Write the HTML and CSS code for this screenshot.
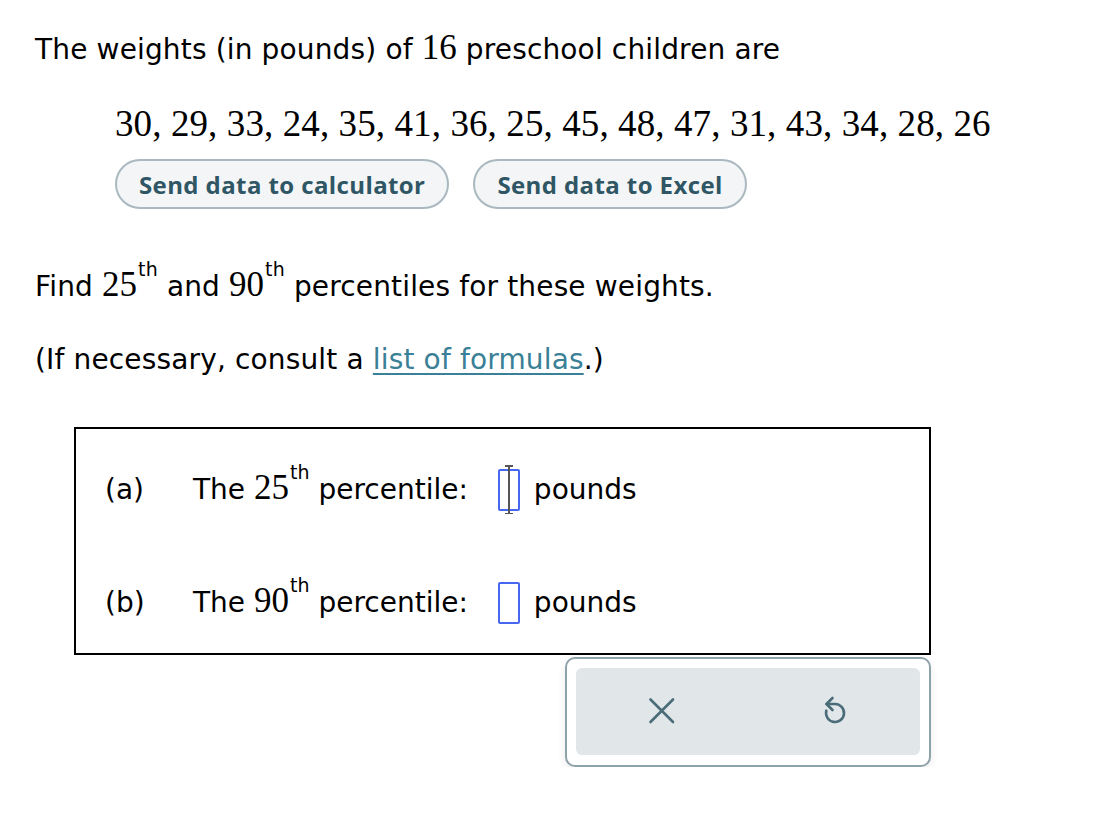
FILE: index.html
```html
<!DOCTYPE html>
<html>
<head>
<meta charset="utf-8">
<link rel="stylesheet" href="styles.css">
</head>
<body>
<div class="page">
  <p class="intro">The weights (in pounds) of <span class="m">16</span> preschool children are</p>
  <div class="data">
    <div class="nums">30, 29, 33, 24, 35, 41, 36, 25, 45, 48, 47, 31, 43, 34, 28, 26</div>
    <div class="btns">
      <button class="pill">Send data to calculator</button>
      <button class="pill">Send data to Excel</button>
    </div>
  </div>
  <p class="find">Find <span class="m">25</span><sup>th</sup> and <span class="m">90</span><sup>th</sup> percentiles for these weights.</p>
  <p class="note">(If necessary, consult a <a href="#">list of formulas</a>.)</p>
  <div class="answers">
    <div class="row">
      <span class="lbl">(a)</span>
      <span class="txt">The <span class="m">25</span><sup>th</sup> percentile:</span>
      <span class="box"><span class="caret"></span></span>
      <span class="unit">pounds</span>
    </div>
    <div class="row">
      <span class="lbl">(b)</span>
      <span class="txt">The <span class="m">90</span><sup>th</sup> percentile:</span>
      <span class="box"></span>
      <span class="unit">pounds</span>
    </div>
  </div>
  <div class="tools">
    <div class="tools-inner">
      <svg class="ico" width="45" height="45" viewBox="0 0 45 45"><path d="M10.5 10.5L33 33M33 10.5L10.5 33" stroke="#4a6b78" stroke-width="2.6" stroke-linecap="round" fill="none"/></svg>
      <svg class="ico" width="45" height="45" viewBox="0 0 45 45"><path d="M14.5 15H23A9 9 0 1 1 14.3 21.7" stroke="#4a6b78" stroke-width="2.6" stroke-linecap="round" stroke-linejoin="round" fill="none"/><path d="M20.5 9L14.5 15L20.5 21" stroke="#4a6b78" stroke-width="2.6" stroke-linecap="round" stroke-linejoin="round" fill="none"/></svg>
    </div>
  </div>
</div>
</body>
</html>
```

FILE: styles.css
```css
html, body { margin: 0; padding: 0; background: #fff; }
body { font-family: "DejaVu Sans", Verdana, sans-serif; color: #000; }
.page { padding: 28px 0 0 35px; width: 1075px; }
p { margin: 0; letter-spacing: 0.15px; }
.m { font-family: "Liberation Serif", "Times New Roman", serif; font-size: 35px; line-height: 1; letter-spacing: 0; }
sup { font-size: 19px; line-height: 1; vertical-align: baseline; position: relative; top: -20px; margin-left: 1px; }
.intro { font-size: 28px; line-height: 44px; }
.data { padding: 30px 0 0 80px; }
.nums { font-family: "Liberation Serif", "Times New Roman", serif; font-size: 37px; line-height: 44px; letter-spacing: 0.1px; }
.btns { display: flex; gap: 24px; margin-top: 13px; }
.pill { font-family: "Open Sans", "Lato", sans-serif; font-weight: 700; font-size: 24px; letter-spacing: 0.4px; color: #2f5664; background: #f3f5f6; border: 2px solid #a9b9bf; border-radius: 26px; height: 50px; padding: 0 22px; cursor: pointer; }
.find { font-size: 28px; line-height: 44px; margin-top: 56px; }
.note { font-size: 28px; line-height: 44px; margin-top: 29px; }
.note a { color: #3a8096; text-decoration: underline; text-underline-offset: 4px; text-decoration-thickness: 1.5px; }
.answers { margin: 45px 0 0 39px; width: 857px; height: 228px; box-sizing: border-box; border: 2px solid #000; padding: 39px 0 0 29px; display: flex; flex-direction: column; gap: 69px; }
.row { display: flex; align-items: center; font-size: 28px; line-height: 44px; height: 44px; }
.lbl { width: 88px; }
.txt { margin-right: 30px; }
.box { display: block; width: 22px; height: 42px; box-sizing: border-box; border: 2px solid #4767f0; border-radius: 2px; position: relative; margin-right: 14px; }
.caret { position: absolute; left: 8px; top: -6px; width: 2px; height: 49px; background: #555; }
.caret::before, .caret::after { content: ""; position: absolute; left: -3px; width: 8px; height: 1.5px; background: #555; }
.caret::before { top: 0; }
.caret::after { bottom: 0; }
.tools { margin: 2px 0 0 530px; width: 366px; height: 110px; border: 2px solid #8ea2aa; border-radius: 10px; background: #fff; box-sizing: border-box; padding: 9px 9px 10px; box-shadow: 0 4px 10px rgba(0,0,0,0.08); }
.tools-inner { height: 100%; background: #e1e6e9; border-radius: 6px; display: flex; align-items: center; justify-content: space-around; }
.ico { display: block; }
```
